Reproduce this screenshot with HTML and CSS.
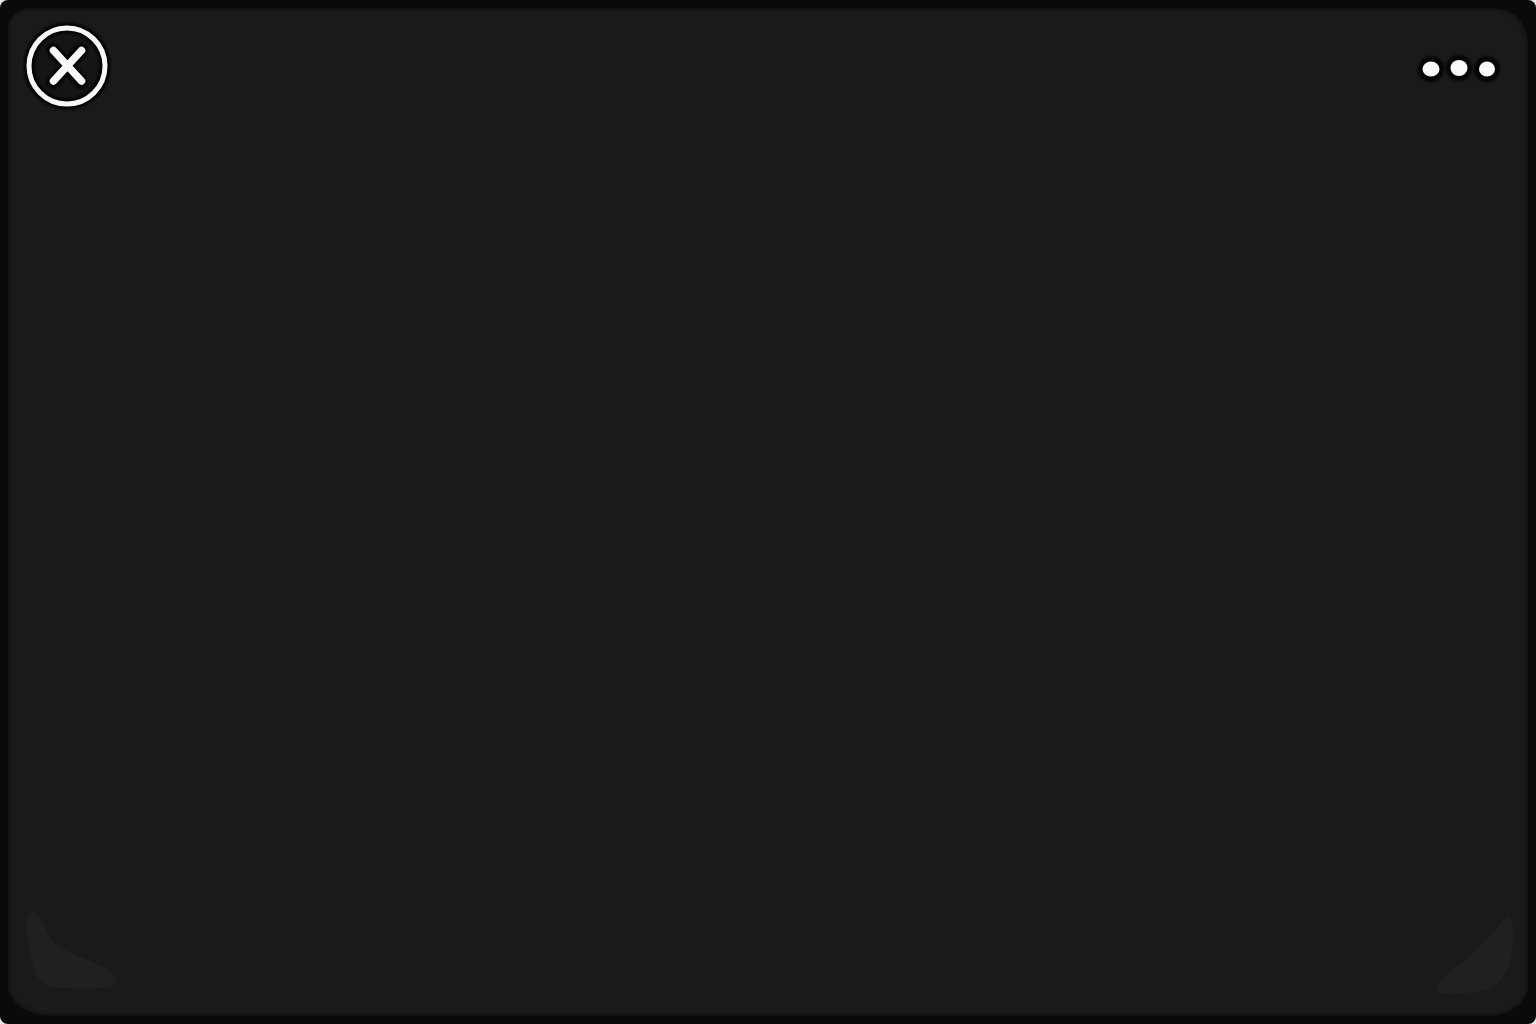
FILE: index.html
```html
<!DOCTYPE html>
<html lang="en">
<head>
<meta charset="utf-8">
<title>Viewer</title>
<link rel="stylesheet" href="styles.css">
</head>
<body>
<main class="bezel">
  <section class="panel">
    <header class="toolbar">
      <button class="icon-btn" aria-label="Close">
        <svg class="close-icon" viewBox="0 0 92 92" width="92" height="92">
          <circle cx="46" cy="46" r="36" fill="#151515" />
          <g class="halo">
            <circle cx="46" cy="46" r="38" fill="none" stroke="#050505" stroke-width="11" />
            <path d="M32 30 L60 62 M60 30 L32 62" stroke="#050505" stroke-width="14" stroke-linecap="round" />
          </g>
          <circle cx="46" cy="46" r="38" fill="none" stroke="#f7f7f7" stroke-width="5" />
          <path d="M32.500 30.500 L60.500 61 M60.500 30.500 L32.500 61" stroke="#f7f7f7" stroke-width="7.500" stroke-linecap="round" />
        </svg>
      </button>
      <button class="icon-btn more-btn" aria-label="More">
        <svg viewBox="0 0 90 34" width="90" height="34">
          <g class="halo">
            <circle cx="17" cy="17" r="13" fill="#050505" />
            <circle cx="45" cy="16" r="13" fill="#050505" />
            <circle cx="73" cy="17" r="13" fill="#050505" />
          </g>
          <ellipse cx="17" cy="17" rx="8.500" ry="7.500" fill="#f8f8f8" />
          <ellipse cx="45" cy="16" rx="8.500" ry="8" fill="#f8f8f8" />
          <ellipse cx="73" cy="17" rx="8" ry="7.500" fill="#f8f8f8" />
        </svg>
      </button>
    </header>
    <svg class="corner corner-left" viewBox="0 0 100 84" width="100" height="84">
      <path d="M6 1 C12 1 18 15 24 26 C29 33 34 36 41 40 C50 45 58 47 64 50 C74 54 84 58 89 65 C92 70 91 74 84 76 C78 78 50 78 30 77 C20 76 13 72 9 60 C5 46 1 30 1 15 C1 6 3 1 6 1 Z" />
    </svg>
    <svg class="corner corner-right" viewBox="0 0 84 82" width="84" height="82">
      <path d="M77 2 C80 2 81 8 81 16 C81 26 81 34 79 42 C76 53 73 62 67 67 C60 73 54 75 47 76 C38 78 28 79 21 79 C10 79 3 77 4 72 C6 67 13 60 21 54 C30 47 39 41 47 32 C54 25 59 20 64 14 C68 8 73 2 77 2 Z" />
    </svg>
  </section>
</main>
</body>
</html>
```
FILE: styles.css
```css
html,
body {
  margin: 0;
  height: 100%;
  background: #e8e8e8;
}

.bezel {
  box-sizing: border-box;
  height: 100vh;
  padding: 8px;
  background: #0a0a0a;
  border-radius: 8px;
}

.panel {
  position: relative;
  box-sizing: border-box;
  height: 100%;
  padding: 12px 24px 0 13px;
  background: #1a1a1a;
  border-radius: 22px 34px 40px 44px / 20px 34px 30px 30px;
  box-shadow: inset 0 0 4px #0a0a0a;
}

.toolbar {
  display: flex;
  justify-content: space-between;
  align-items: flex-start;
}

.icon-btn {
  display: block;
  padding: 0;
  border: 0;
  background: none;
}

.icon-btn svg {
  display: block;
  overflow: visible;
}

.halo {
  filter: blur(1px);
}

.more-btn {
  margin-top: 32px;
}

.corner {
  position: absolute;
}

.corner path {
  fill: #202020;
}

.corner-left {
  left: 18px;
  bottom: 21px;
}

.corner-right {
  right: 12px;
  bottom: 19px;
}
```
